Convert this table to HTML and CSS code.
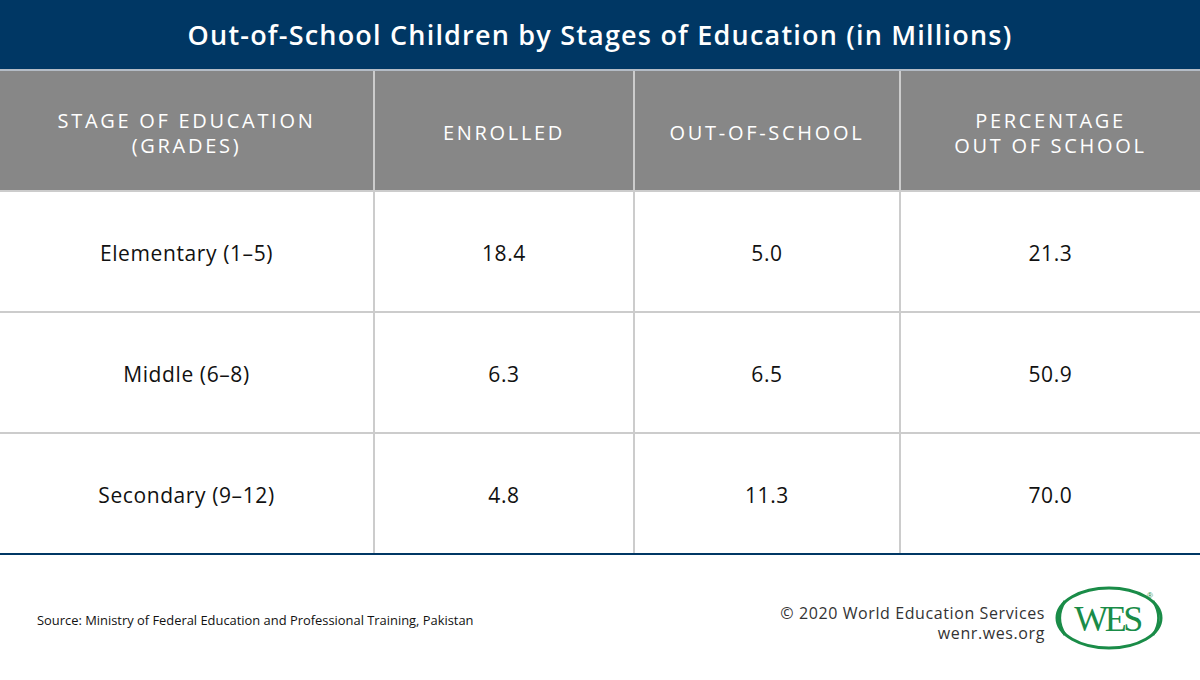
FILE: index.html
```html
<!DOCTYPE html>
<html>
<head>
<meta charset="utf-8">
<link rel="stylesheet" href="styles.css">
</head>
<body>
<div class="page">
  <div class="title">Out-of-School Children by Stages of Education (in Millions)</div>
  <div class="grid">
    <div class="cell head">STAGE OF EDUCATION<br>(GRADES)</div>
    <div class="cell head">ENROLLED</div>
    <div class="cell head">OUT-OF-SCHOOL</div>
    <div class="cell head">PERCENTAGE<br>OUT OF SCHOOL</div>

    <div class="cell">Elementary (1–5)</div>
    <div class="cell">18.4</div>
    <div class="cell">5.0</div>
    <div class="cell">21.3</div>

    <div class="cell">Middle (6–8)</div>
    <div class="cell">6.3</div>
    <div class="cell">6.5</div>
    <div class="cell">50.9</div>

    <div class="cell">Secondary (9–12)</div>
    <div class="cell">4.8</div>
    <div class="cell">11.3</div>
    <div class="cell">70.0</div>
  </div>
  <div class="footer">
    <div class="source">Source: Ministry of Federal Education and Professional Training, Pakistan</div>
    <div class="credit">
      <div class="credit-text">
        <div>© 2020 World Education Services</div>
        <div>wenr.wes.org</div>
      </div>
      <div class="logo">
        <svg width="114" height="68" viewBox="0 0 114 68">
          <ellipse cx="56" cy="35" rx="52" ry="30" fill="none" stroke="#1a8c48" stroke-width="3"/>
          <path d="M12 18 Q1 35 12 52" fill="none" stroke="#1a8c48" stroke-width="3.2"/>
          <path d="M100 18 Q111 35 100 52" fill="none" stroke="#1a8c48" stroke-width="2.6"/>
          <text x="54" y="48" text-anchor="middle" class="logo-text">WES</text>
          <text x="97" y="15" text-anchor="middle" class="logo-reg">®</text>
        </svg>
      </div>
    </div>
  </div>
</div>
</body>
</html>
```

FILE: styles.css
```css
* { box-sizing: border-box; }
html, body { margin: 0; padding: 0; background: #ffffff; }
.page {
  width: 1200px;
  height: 680px;
  display: flex;
  flex-direction: column;
  font-family: "Open Sans", "Noto Sans", sans-serif;
  overflow: hidden;
}
.title {
  height: 71px;
  background: #003764;
  border-bottom: 2px solid #b4bcc6;
  color: #ffffff;
  font-size: 27px;
  font-weight: 600;
  letter-spacing: 1.2px;
  display: flex;
  align-items: center;
  justify-content: center;
  padding-bottom: 1px;
}
.grid {
  display: grid;
  grid-template-columns: 373px 258px 264px 1fr;
  grid-template-rows: 119px 119px 119px 119px;
  column-gap: 2px;
  row-gap: 2px;
  background: #cccccc;
  border-bottom: 2px solid #003764;
}
.cell {
  background: #ffffff;
  display: flex;
  align-items: center;
  justify-content: center;
  text-align: center;
  font-size: 21px;
  letter-spacing: 0.6px;
  color: #111111;
  padding-top: 3px;
}
.cell.head {
  background: #878787;
  color: #ffffff;
  font-size: 20px;
  letter-spacing: 2.7px;
  line-height: 25px;
  padding-top: 4px;
}
.footer {
  flex: 1;
  display: flex;
  align-items: center;
  justify-content: space-between;
  padding: 0 33px 0 37px;
}
.source {
  font-size: 12.9px;
  color: #111111;
  margin-top: 4px;
}
.credit {
  display: flex;
  align-items: center;
  gap: 8px;
}
.credit-text {
  text-align: right;
  font-size: 16px;
  letter-spacing: 0.6px;
  line-height: 20px;
  color: #333333;
  margin-top: 10px;
}
.logo { display: flex; margin-top: -2px; }
.logo-text {
  font-family: "Liberation Serif", serif;
  font-size: 36px;
  fill: #1a8c48;
  letter-spacing: -3.5px;
}
.logo-reg {
  font-family: "Liberation Sans", sans-serif;
  font-size: 8px;
  fill: #1a8c48;
}
```
